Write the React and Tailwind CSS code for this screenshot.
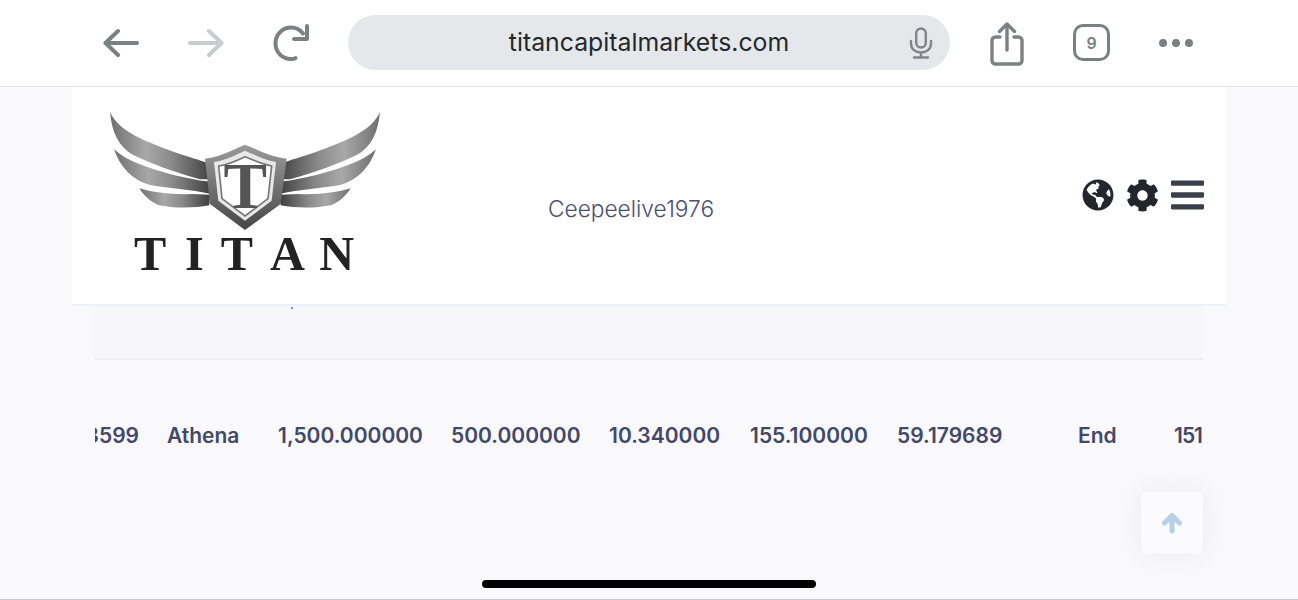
import React from 'react';
import { FaGlobeAmericas, FaCog, FaBars } from 'react-icons/fa';

const cells = [
  { text: '1,500.000000', width: 'w-[173px]' },
  { text: '500.000000', width: 'w-[158px]' },
  { text: '10.340000', width: 'w-[141px]' },
  { text: '155.100000', width: 'w-[147px]' },
  { text: '59.179689', width: 'w-[181px]' },
  { text: 'End', width: 'w-[96px]' },
];

const NavArrow = ({ flip, color }) => (
  <svg width="36" height="30" viewBox="0 0 36 30" fill="none" stroke={color} strokeWidth="4" strokeLinecap="round" strokeLinejoin="round" className={flip ? '-scale-x-100' : ''}>
    <path d="M34 15H3M15 3 2.500 15 15 27" />
  </svg>
);

const Reload = () => (
  <svg width="36" height="38" viewBox="0 0 36 38" fill="none" stroke="#7b8083" strokeWidth="4" strokeLinecap="round" strokeLinejoin="round">
    <path d="M30 9.500C27 5.500 22.500 3.500 18 3.500 9.500 3.500 2.500 10.500 2.500 19.500S9.500 35 18 35c2 0 3.500-.3 4.500-.8" />
    <path d="M34 2v13H21" />
  </svg>
);

const Mic = () => (
  <svg width="24" height="32" viewBox="0 0 24 32" fill="none" stroke="#7f8588" strokeWidth="2.400" strokeLinecap="round">
    <rect x="7.200" y="1.500" width="9.600" height="19" rx="4.800" />
    <path d="M2 14v2.500C2 22 6.500 25.500 12 25.500S22 22 22 16.500V14M12 25.500V30M5 30.500h14" />
  </svg>
);

const Share = () => (
  <svg width="34" height="44" viewBox="0 0 34 44" fill="none" stroke="#7b8083" strokeWidth="3.400" strokeLinecap="round" strokeLinejoin="round">
    <path d="M10 15H5.500C3.500 15 2 16.500 2 18.500v20C2 40.500 3.500 42 5.500 42h23c2 0 3.500-1.500 3.500-3.500v-20c0-2-1.500-3.500-3.500-3.500H24" />
    <path d="M17 28V2M9.500 9.500 17 2l7.500 7.500" />
  </svg>
);

const Wing = () => (
  <g fill="url(#wingFill)">
    <path d="M60 35C85 95 170 125 250 155 300 172 330 180 350 188L368 238 330 238C250 215 180 190 130 165 85 140 65 95 60 35Z" />
    <path d="M72 148C110 185 180 205 240 222 280 232 310 238 335 242L365 245 362 282C310 270 240 265 180 255 125 240 90 200 72 148Z" />
    <path d="M148 265C190 278 250 285 305 282L360 284 358 316C310 325 250 325 205 315 180 305 160 285 148 265Z" />
  </g>
);

const Logo = () => (
  <svg width="300" height="180" viewBox="0 0 900 540" className="shrink-0">
    <defs>
      <linearGradient id="wingFill" x1="0" y1="0" x2="1" y2="0">
        <stop offset="0" stopColor="#6f6f6f" />
        <stop offset="0.35" stopColor="#a8a8a8" />
        <stop offset="0.6" stopColor="#8a8a8a" />
        <stop offset="1" stopColor="#3e3e3e" />
      </linearGradient>
      <linearGradient id="shieldFill" x1="0" y1="0" x2="0" y2="1">
        <stop offset="0" stopColor="#9a9a9a" />
        <stop offset="0.6" stopColor="#6a6a6a" />
        <stop offset="1" stopColor="#444" />
      </linearGradient>
    </defs>
    <Wing />
    <g transform="matrix(-1 0 0 1 930 0)">
      <Wing />
    </g>
    <path d="M345 176C395 170 425 150 465 134 505 150 540 170 590 176L572 312 465 390 360 312Z" fill="url(#shieldFill)" />
    <path d="M372 186C410 180 435 165 465 152 495 165 525 180 558 186L545 302 465 362 385 302Z" fill="#e8e8e8" />
    <path d="M386 198C420 192 445 180 465 170 488 180 515 192 545 198L534 296 465 348 396 296Z" fill="#fff" stroke="#777" strokeWidth="5" />
    <text x="466" y="325" textAnchor="middle" fontFamily="'Liberation Serif', serif" fontWeight="700" fontSize="196" fill="#555">T</text>
    <g fontFamily="'Liberation Serif', serif" fontWeight="700" fontSize="145" fill="#222">
      <text x="132" y="510">T</text>
      <text x="285" y="510">I</text>
      <text x="392" y="510">T</text>
      <text x="540" y="510">A</text>
      <text x="688" y="510">N</text>
    </g>
  </svg>
);

export default function App() {
  return (
    <div className="relative h-[600px] overflow-hidden bg-[#f9f9fc] border-b border-[#c9c9cb] font-['Inter',sans-serif]">
      {/* browser bar */}
      <div className="h-[87px] bg-white border-b border-[#e3e4e6] flex items-center pl-[103px] pb-[1px]">
        <NavArrow color="#7b8083" />
        <div className="ml-[49px]">
          <NavArrow flip color="#c9cbcc" />
        </div>
        <div className="ml-[49px]">
          <Reload />
        </div>
        <div className="ml-[39px] w-[602px] h-[55px] rounded-full bg-[#e5e8eb] relative flex items-center justify-center">
          <span className="text-[24.800px] text-[#24282c]">titancapitalmarkets.com</span>
          <div className="absolute right-[17px] top-[12px]">
            <Mic />
          </div>
        </div>
        <div className="ml-[40px] mt-[2px]">
          <Share />
        </div>
        <div className="ml-[49px] w-[37px] h-[37px] border-[3px] border-[#7b8083] rounded-[10px] flex items-center justify-center text-[16px] font-semibold text-[#7b8083]">
          9
        </div>
        <div className="ml-[49px] flex gap-[5px]">
          <span className="w-[8px] h-[8px] rounded-full bg-[#7b8083]" />
          <span className="w-[8px] h-[8px] rounded-full bg-[#7b8083]" />
          <span className="w-[8px] h-[8px] rounded-full bg-[#7b8083]" />
        </div>
      </div>

      {/* site header */}
      <div className="mx-[72px] h-[219px] bg-white border-b-2 border-[#eef0fa] flex pl-[18px] pt-[13px]">
        <Logo />
        <div className="ml-[158px] mt-[94px] text-[22.700px] font-light leading-[30px] text-[#4a5073]">Ceepeelive1976</div>
        <div className="ml-auto mr-[22px] mt-[79px] flex items-start gap-[12px] text-[#23262d]">
          <FaGlobeAmericas className="w-[32px] h-[32px]" />
          <FaCog className="w-[33px] h-[33px]" />
          <FaBars className="w-[33px] h-[38px] -mt-[3px] text-[#3a3f4b]" />
        </div>
      </div>

      {/* table */}
      <div className="mx-[95px]">
        <div className="relative h-[54px] bg-[#f7f7fa] border-b-2 border-[#eeeff3]">
          <span className="absolute left-[196px] top-[1px] w-[2px] h-[2px] bg-[#8a8d9c]" />
        </div>
        <div className="mt-[61px] flex items-center h-[30px] overflow-hidden text-[21px] font-semibold text-[#42486a] whitespace-nowrap">
          <div className="w-[44px] shrink-0 flex justify-end">
            <span>3599</span>
          </div>
          <div className="w-[111px] shrink-0 ml-[28px]">Athena</div>
          {cells.map((cell) => (
            <div key={cell.text} className={`${cell.width} shrink-0`}>
              {cell.text}
            </div>
          ))}
          <div className="shrink-0 tracking-[-1px]">151</div>
        </div>
      </div>

      <div className="absolute left-[1141px] top-[492px] w-[62px] h-[62px] rounded-[6px] bg-[#fbfbfd] shadow-[0_0_24px_rgba(60,70,110,0.08)] flex items-center justify-center">
        <svg width="22" height="22" viewBox="0 0 22 22" fill="none" stroke="#b5d0e8" strokeWidth="5" strokeLinecap="round" strokeLinejoin="round">
          <path d="M11 19V4M3.500 11 11 3.500l7.500 7.500" />
        </svg>
      </div>
      <div className="absolute left-[482px] top-[580px] w-[334px] h-[8px] rounded-full bg-black" />
    </div>
  );
}
